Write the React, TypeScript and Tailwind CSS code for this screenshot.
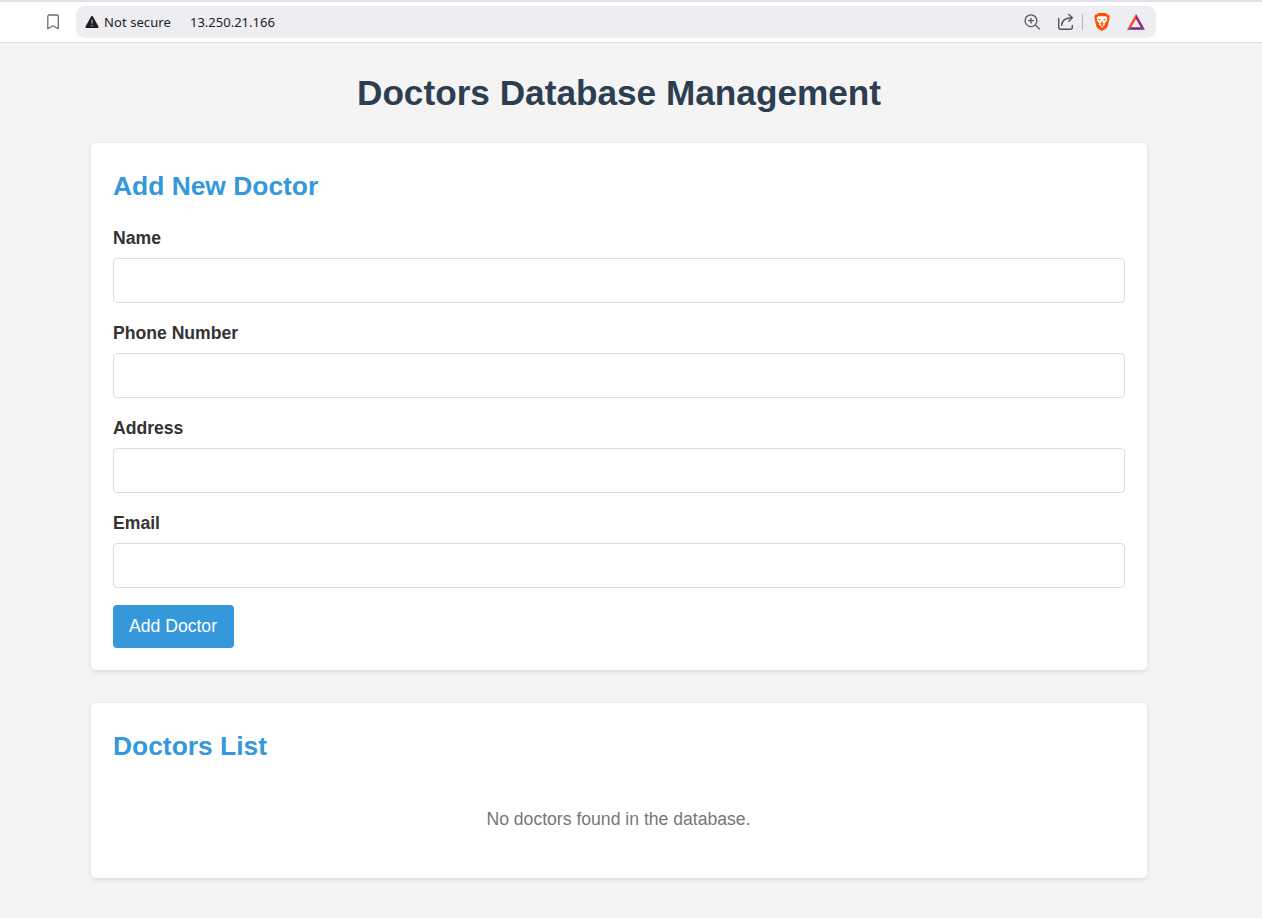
import React from "react";

const fields = ["Name", "Phone Number", "Address", "Email"];

function BrowserBar() {
  return (
    <div className="flex h-[43px] items-start border-t-2 border-b border-t-[#e3e3e8] border-b-[#dfdfe1] bg-white pt-1 pl-[46px]">
      <svg className="mt-2 h-4 w-[14px] shrink-0" viewBox="0 0 14 16" fill="none" stroke="#6b6b75" strokeWidth="1.3" strokeLinejoin="round">
        <path d="M1.8 2.4Q1.8 1 3.2 1H10.9Q12.3 1 12.3 2.4V14.7L7 11.8L1.8 14.7Z" />
      </svg>
      <div className="ml-4 flex h-8 w-[1080px] items-center rounded-[9px] bg-[#ededf2] pr-[11px] pl-[9px] font-['Noto_Sans',sans-serif] text-[13px] text-[#202027]">
        <svg className="h-[14px] w-[14px] shrink-0" viewBox="0 0 14 14">
          <path d="M7 1.9L12.6 12H1.4Z" fill="#1d1d22" stroke="#1d1d22" strokeWidth="2" strokeLinejoin="round" />
          <path d="M7 4.8V8.6M7 10V11.2" stroke="#b9b9bf" strokeWidth="1.2" />
        </svg>
        <span className="ml-[5px] w-[86px] pt-px tracking-[0.08px] whitespace-nowrap">Not secure</span>
        <span className="flex-1 pt-px">13.250.21.166</span>
        <svg className="h-[18px] w-[18px] shrink-0" viewBox="0 0 18 18" fill="none" stroke="#55555f" strokeWidth="1.3">
          <circle cx="8" cy="7.7" r="5.9" />
          <path d="M12.4 12.1L16.7 16.3M5.2 7.7H10.8M8 4.9V10.5" />
        </svg>
        <svg className="ml-4 h-[18px] w-[18px] shrink-0" viewBox="0 0 18 18" fill="none" stroke="#55555f" strokeWidth="1.4" strokeLinecap="round" strokeLinejoin="round">
          <path d="M1.7 5.4V14.3Q1.7 16.2 3.6 16.2H13.4Q15.3 16.2 15.3 14.3V12.4" />
          <path d="M4.7 12.2C4.9 7.3 8 4.8 15.2 4.8M11.8 1.4L15.4 4.8L11.8 8.2" />
        </svg>
        <span className="ml-[7px] h-4 w-px bg-[#b5b5bd]" />
        <svg className="ml-[11px] h-[18px] w-4 shrink-0" viewBox="0 0 16 18">
          <path d="M4.2 0H11.8L13.2 1.5L14.5 1.4L15.8 3.2L15.2 5L15.5 6.1L13.4 13.8Q13 14.8 12.2 15.4L8 18L3.8 15.4Q3 14.8 2.6 13.8L.5 6.1L.8 5L.2 3.2L1.5 1.4L2.8 1.5Z" fill="#ff5000" />
          <path d="M4.2 3L6.4 3.4L8 3L9.6 3.4L11.8 3L13.5 5.2L12.8 6.5L13 7.7L10.6 10.4L11.2 11.6L8 14.8L4.8 11.6L5.4 10.4L3 7.7L3.2 6.5L2.5 5.2Z" fill="#fff" />
          <path d="M3.8 5.8L6.5 6.3L6.1 8.1ZM12.2 5.8L9.5 6.3L9.9 8.1ZM7.2 8.2H8.8L8.5 9.7L10 10.5L8 11.5L6 10.5L7.5 9.7ZM6.2 11.9L8 11.2L9.8 11.9L8 13.3Z" fill="#ff5000" />
        </svg>
        <svg className="ml-[17px] h-[18px] w-[18px] shrink-0" viewBox="0 0 18 18">
          <path d="M9 1L0 16.8L4.2 14.2L9 6Z" fill="#ff4724" />
          <path d="M9 1L18 16.8L13.8 14.2L9 6Z" fill="#9e1f63" />
          <path d="M0 16.8L4.2 14.2H13.8L18 16.8Z" fill="#662d91" />
        </svg>
      </div>
    </div>
  );
}

export default function App() {
  return (
    <div className="h-[918px] overflow-hidden bg-[#f4f4f4] font-['Liberation_Sans',Arial,sans-serif] text-[#333]">
      <BrowserBar />
      <main className="ml-[91px] w-[1056px] pt-[22px]">
        <h1 className="mb-[22px] text-center text-[35.2px] leading-[56px] font-bold whitespace-nowrap text-[#2c3e50]">
          Doctors Database Management
        </h1>
        <section className="h-[527px] rounded-[5px] bg-white px-[22px] pt-[22px] shadow-[0_2px_5px_rgba(0,0,0,0.1)]">
          <h2 className="mb-[18px] text-[26.4px] leading-[42px] font-bold text-[#3498db]">Add New Doctor</h2>
          <form>
            {fields.map((name) => (
              <label key={name} className="mb-[17px] block text-[17.6px] leading-[26px] font-bold">
                <span className="mb-[7px] block">{name}</span>
                <input className="block h-[45px] w-full rounded-[4px] border border-[#ddd] bg-white px-2 font-normal outline-none" />
              </label>
            ))}
            <button type="button" className="block h-[43px] w-[121px] rounded-[4px] bg-[#3498db] pr-px text-[17.6px] whitespace-nowrap text-white">
              Add Doctor
            </button>
          </form>
        </section>
        <section className="mt-[33px] h-[175px] rounded-[5px] bg-white px-[22px] pt-[22px] shadow-[0_2px_5px_rgba(0,0,0,0.1)]">
          <h2 className="text-[26.4px] leading-[42px] font-bold text-[#3498db]">Doctors List</h2>
          <p className="mt-[38px] pr-px text-center text-[17.6px] leading-7 text-[#777]">No doctors found in the database.</p>
        </section>
      </main>
    </div>
  );
}
